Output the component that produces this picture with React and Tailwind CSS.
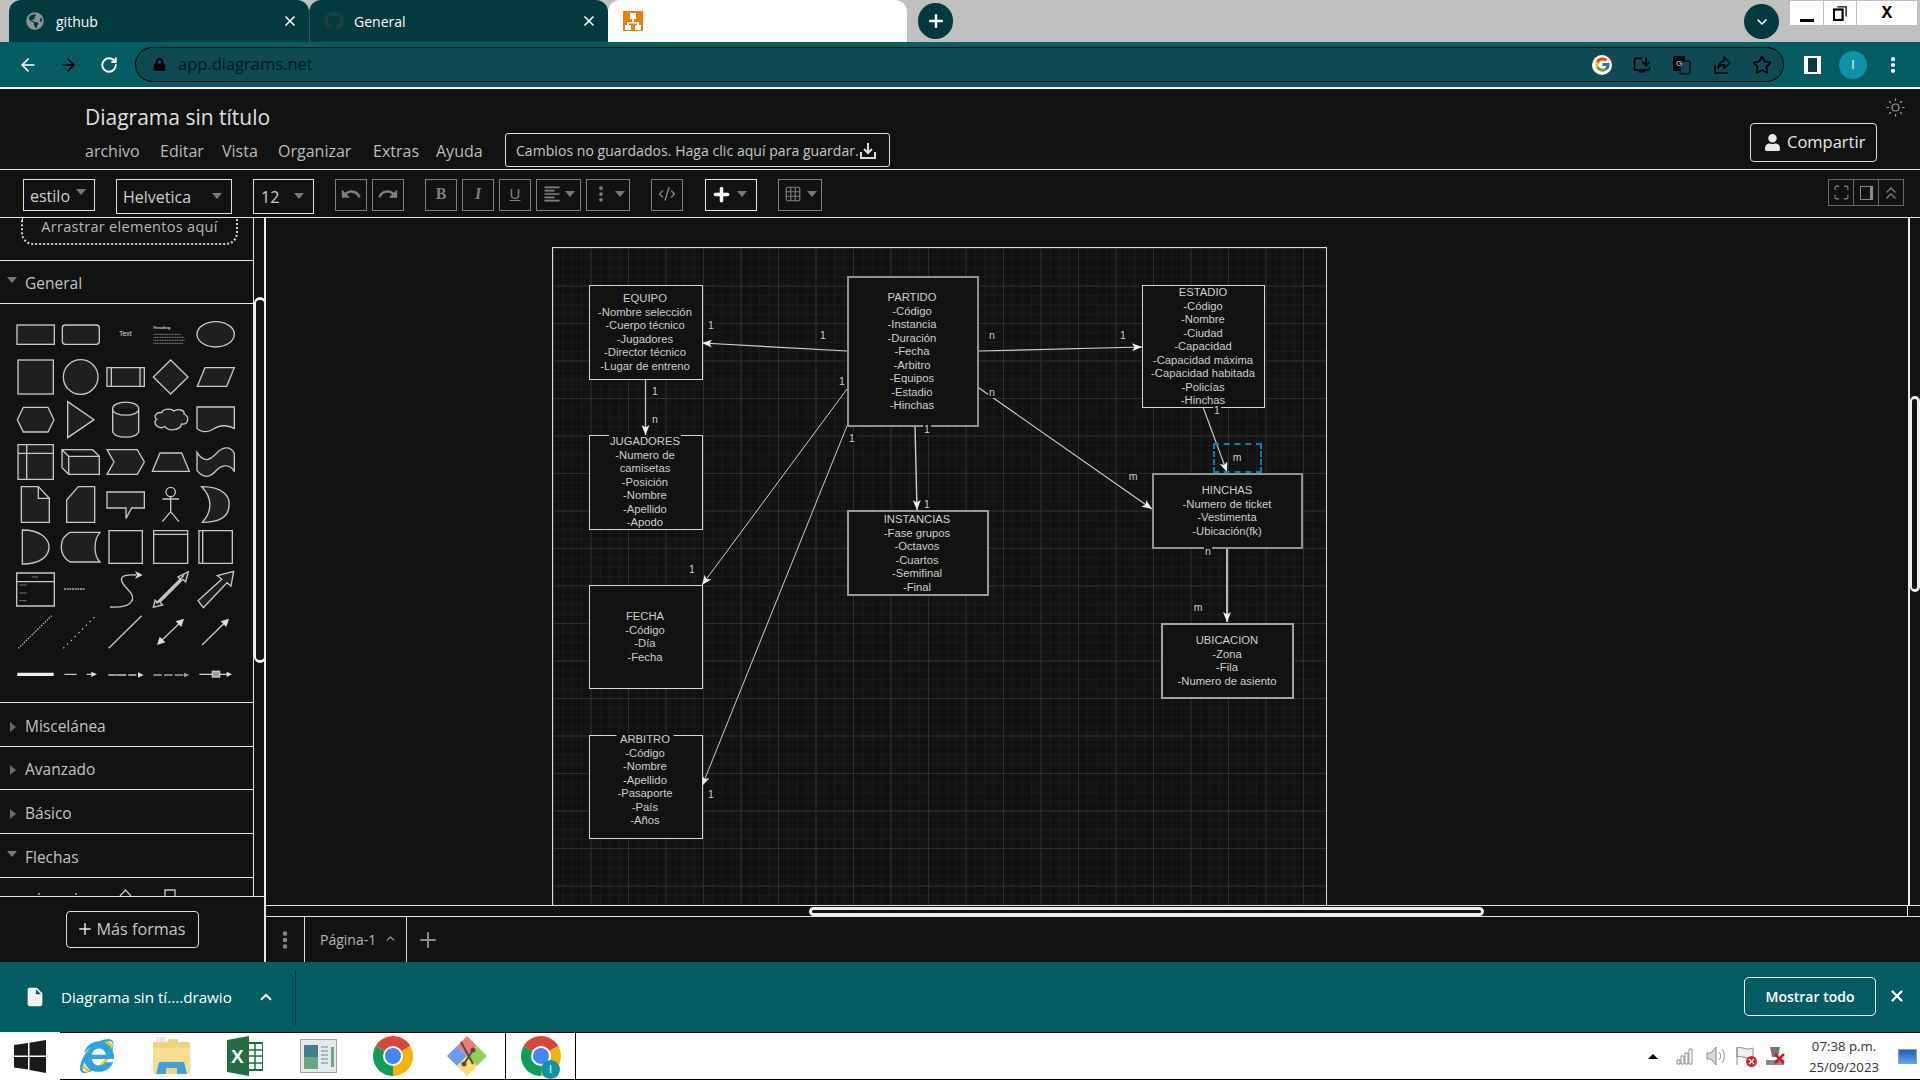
import React from 'react';
import { ArrowLeft, ArrowRight, RotateCw, Star, MoreVertical, Sun, Plus, X, ChevronUp, ChevronDown, Maximize, ChevronsUp, Grid3x3, CodeXml } from 'lucide-react';
import { FaGlobeAmericas, FaGithub, FaLock, FaUser, FaInternetExplorer } from 'react-icons/fa';
import { FcGoogle } from 'react-icons/fc';
import { MdUndo, MdRedo, MdFormatAlignLeft, MdOutlineInstallDesktop, MdInsertDriveFile } from 'react-icons/md';

const PAGE_X = 552;
const PAGE_Y = 247;

const nodes = [
  { x: 589, y: 285, r: 702, b: 379, cx: 645, top: 299, border: 'border border-[#d8d8d8]', lines: ['EQUIPO', '-Nombre selección', '-Cuerpo técnico', '-Jugadores', '-Director técnico', '-Lugar de entreno'] },
  { x: 847, y: 276, r: 978, b: 426, cx: 912, top: 298, border: 'border-2 border-[#929292]', lines: ['PARTIDO', '-Código', '-Instancia', '-Duración', '-Fecha', '-Arbitro', '-Equipos', '-Estadio', '-Hinchas'] },
  { x: 1142, y: 285, r: 1264, b: 407, cx: 1203, top: 293, border: 'border border-[#d8d8d8]', lines: ['ESTADIO', '-Código', '-Nombre', '-Ciudad', '-Capacidad', '-Capacidad máxima', '-Capacidad habitada', '-Policías', '-Hinchas'] },
  { x: 589, y: 435, r: 702, b: 529, cx: 645, top: 442, border: 'border border-[#d8d8d8]', lines: ['JUGADORES', '-Numero de', 'camisetas', '-Posición', '-Nombre', '-Apellido', '-Apodo'] },
  { x: 847, y: 510, r: 988, b: 595, cx: 917, top: 520, border: 'border-2 border-[#9a9a9a]', lines: ['INSTANCIAS', '-Fase grupos', '-Octavos', '-Cuartos', '-Semifinal', '-Final'] },
  { x: 1152, y: 473, r: 1302, b: 548, cx: 1227, top: 491, border: 'border-2 border-[#929292]', lines: ['HINCHAS', '-Numero de ticket', '-Vestimenta', '-Ubicación(fk)'] },
  { x: 1161, y: 623, r: 1293, b: 698, cx: 1227, top: 641, border: 'border-2 border-[#a2a2a2]', lines: ['UBICACION', '-Zona', '-Fila', '-Numero de asiento'] },
  { x: 589, y: 585, r: 702, b: 688, cx: 645, top: 617, border: 'border border-[#d8d8d8]', lines: ['FECHA', '-Código', '-Día', '-Fecha'] },
  { x: 589, y: 735, r: 702, b: 838, cx: 645, top: 740, border: 'border border-[#d8d8d8]', lines: ['ARBITRO', '-Código', '-Nombre', '-Apellido', '-Pasaporte', '-País', '-Años'] },
];

const edges = [
  [847, 351, 702, 343, 1.2],
  [645.5, 379, 645.5, 435, 1.2],
  [979, 351, 1142, 347, 1.2],
  [979, 388, 1152, 509, 1.1],
  [915, 426, 917, 510, 1.4],
  [847, 389, 702, 585, 1],
  [847, 426, 702, 786, 1],
  [1203, 407, 1227, 472, 1.1],
  [1227, 548, 1227, 622, 1.8],
];

const edgeLabels = [
  ['1', 711, 325], ['1', 823, 335], ['n', 992, 335], ['1', 842, 381], ['n', 992, 392],
  ['1', 852, 438], ['1', 927, 429], ['1', 927, 504], ['1', 655, 391], ['n', 655, 419],
  ['1', 692, 569], ['1', 711, 794], ['1', 1123, 335], ['1', 1217, 410], ['m', 1133, 476],
  ['n', 1208, 551], ['m', 1198, 607], ['m', 1237, 457],
];

const Caret = ({ className = '' }) => (
  <span className={`block w-0 h-0 border-x-[5px] border-x-transparent border-t-[6px] border-t-[#7a7a7a] ${className}`} />
);

const SideCaret = () => (
  <span className="block w-0 h-0 ml-[10px] mr-[10px] border-y-[5px] border-y-transparent border-l-[6px] border-l-[#6a6a6a]" />
);

const SectionRow = ({ label, open, className = '' }) => (
  <div className={`flex items-center shrink-0 pt-[4px] border-b border-[#e6e6e6] text-[15.5px] text-[#c4c4c4] ${className}`}>
    {open ? <Caret className="ml-[7px] mr-[8px] -mt-2" /> : <SideCaret />}
    <span className={open ? '' : '-ml-[1px]'}>{label}</span>
  </div>
);

const ToolBtn = ({ className = '', children }) => (
  <div className={`flex items-center justify-center h-[32px] border border-[#808080] text-[#808080] ${className}`}>
    {children}
  </div>
);

// General palette, drawn in a 3x coordinate system
const GeneralShapes = () => (
  <svg viewBox="0 282 759 1197" className="block w-[253px] h-[399px] shrink-0" fill="#1d1f21" stroke="#c8c8c8" strokeWidth="4">
    <rect x="51" y="345" width="112" height="58" />
    <rect x="187" y="345" width="111" height="58" rx="9" />
    <text x="376" y="379" fontSize="21" textAnchor="middle" fill="#d8d8d8" stroke="none" fontFamily="Liberation Sans">Text</text>
    <text x="460" y="356" fontSize="13" fontWeight="700" fill="#c8c8c8" stroke="none" fontFamily="Liberation Sans">Heading</text>
    <path d="M460 373H542M460 382H552M460 391H555M460 400H550" stroke="#b0b0b0" strokeWidth="2" strokeDasharray="4 1" fill="none" />
    <ellipse cx="647" cy="373" rx="56" ry="38" />

    <rect x="54" y="450" width="106" height="102" />
    <circle cx="242" cy="501" r="52" />
    <path d="M321 473H433V529H321ZM334 473V529M420 473V529" />
    <path d="M512 450L564 501L512 552L460 501Z" />
    <path d="M592 529L615 473H703L680 529Z" />

    <path d="M52 629L70 592H144L162 629L144 666H70Z" />
    <path d="M203 575L282 629L203 683Z" />
    <path d="M338 596C338 570 416 570 416 596V662C416 688 338 688 338 662ZM338 596C338 622 416 622 416 596" />
    <path d="M485 608C490 595 515 595 522 603C535 595 555 600 552 612C570 620 565 645 545 642C540 662 505 665 495 650C475 660 455 640 470 628C458 620 470 605 485 608Z" />
    <path d="M591 591H703V655C675 640 650 650 635 660C620 668 600 666 591 655Z" />

    <path d="M54 704H160V808H54ZM80 704V808M54 730H160" />
    <path d="M186 719H278L298 739V793H206L186 773ZM186 719L206 739H298M206 739V793" />
    <path d="M321 719H412L433 756L412 793H321L342 756Z" />
    <path d="M457 784L480 729H545L568 784Z" />
    <path d="M591 727C615 765 635 745 650 730C665 712 690 705 703 730V785C690 760 665 765 650 780C630 805 610 805 591 782Z" />

    <path d="M64 830H115L148 865V937H64ZM115 830V865H148" />
    <path d="M200 870L235 830H284V937H200Z" />
    <path d="M321 846H433V894H395L378 925V894H321Z" />
    <circle cx="512" cy="846" r="14" fill="none" />
    <path d="M512 860V905M487 867H537M487 935L512 905L537 935" fill="none" />
    <path d="M605 830C670 830 690 860 687 885C687 920 660 937 607 937C640 900 635 860 605 830Z" />

    <path d="M67 960C120 960 147 985 147 1011C147 1040 120 1062 67 1062Z" />
    <path d="M210 967H300C280 990 280 1035 300 1056H210C175 1035 175 985 210 967Z" />
    <rect x="327" y="962" width="100" height="98" fill="none" />
    <path d="M461 962H563V1060H461ZM461 973H563" fill="none" />
    <path d="M597 962H697V1060H597ZM608 962V1060" fill="none" />

    <path d="M50 1089H163V1188H50ZM50 1115H163" fill="none" />
    <path d="M58 1125H80M58 1149H80M58 1172H80M95 1101H115" stroke="#aaaaaa" strokeWidth="2" fill="none" />
    <path d="M192 1137H255" stroke="#b0b0b0" strokeWidth="5" strokeDasharray="6 2" fill="none" />
    <path d="M330 1191C400 1195 410 1165 385 1140C350 1105 360 1092 408 1095" fill="none" />
    <path d="M428 1095L405 1083L411 1095L405 1107Z" fill="#dddddd" stroke="none" />
    <path d="M460 1192L465 1170L473 1178L542 1109L534 1101L565 1085L557 1116L549 1108L480 1177L488 1185Z M468 1180L552 1096" />
    <path d="M594 1172L665 1108L652 1097L701 1084L693 1128L681 1118L610 1193Z" />

    <path d="M55 1315L155 1217" strokeDasharray="4 4" fill="none" />
    <path d="M190 1315L285 1220" strokeDasharray="4 12" fill="none" />
    <path d="M326 1315L425 1217" fill="none" />
    <path d="M476 1300L548 1231" fill="none" />
    <path d="M471 1305L496 1297L479 1280ZM552 1226L527 1234L544 1251Z" fill="#dddddd" stroke="none" />
    <path d="M606 1305L682 1231" fill="none" />
    <path d="M687 1226L662 1234L679 1251Z" fill="#dddddd" stroke="none" />

    <path d="M52 1393H161" strokeWidth="10" stroke="#eeeeee" />
    <path d="M193 1393H230M260 1393H280" fill="none" />
    <path d="M291 1393L274 1385V1401Z" fill="#dddddd" stroke="none" />
    <path d="M325 1395H420M350 1395H362" fill="none" strokeDasharray="24 6" />
    <path d="M431 1395L414 1387V1403Z" fill="#dddddd" stroke="none" />
    <path d="M460 1395H558" fill="none" strokeDasharray="26 6" stroke="#a0a0a0" />
    <path d="M568 1395L552 1388V1402Z" fill="#a0a0a0" stroke="none" />
    <path d="M598 1393H688" fill="none" />
    <path d="M696 1393L680 1385V1401Z" fill="#dddddd" stroke="none" />
    <rect x="637" y="1384" width="22" height="17" fill="#a0a0a0" stroke="#c8c8c8" />
  </svg>
);

const ChromeLogo = ({ className = '' }) => (
  <svg viewBox="0 0 40 40" className={className}>
    <path d="M20 20L2.7 10A20 20 0 0 1 37.3 10Z" fill="#db4437" />
    <path d="M20 20L37.3 10A20 20 0 0 1 20 40Z" fill="#f4b400" />
    <path d="M20 20L20 40A20 20 0 0 1 2.7 10Z" fill="#0f9d58" />
    <circle cx="20" cy="20" r="10" fill="#ffffff" />
    <circle cx="20" cy="20" r="8" fill="#4285f4" />
  </svg>
);

const TabStrip = () => (
  <div className="flex h-[42px] shrink-0 bg-[#c0c0c0] pl-[9px]">
    <div className="flex items-center w-[300px] bg-[#033a40] rounded-t-xl pl-[17px] pr-[11px] text-white text-[14px]">
      <FaGlobeAmericas className="text-[#8a9496] text-[18px]" />
      <span className="ml-[12px]">github</span>
      <X className="ml-auto" size={16} strokeWidth={2.5} />
    </div>
    <div className="flex items-center w-[299px] bg-[#033a40] rounded-t-xl border-l border-[#2a5a60] pl-[14px] pr-[11px] text-white text-[14px]">
      <FaGithub className="text-[#1c3f44] text-[20px]" />
      <span className="ml-[10px]">General</span>
      <X className="ml-auto" size={16} strokeWidth={2.5} />
    </div>
    <div className="flex items-center w-[299px] bg-white rounded-t-xl pl-[15px]">
      <svg viewBox="0 0 20 20" className="w-[20px] h-[20px]">
        <rect width="20" height="20" fill="#ef7d0d" />
        <path d="M7 2H13V8H11V11H16V14H18V19H12V14H14V12.500H6V14H8V19H2V14H4V11H9V8H7Z" fill="#ffffff" />
      </svg>
    </div>
    <div className="flex items-center justify-center w-[35px] h-[36px] mt-[3px] ml-[11px] rounded-full bg-[#033a40] text-white">
      <Plus size={20} strokeWidth={3} />
    </div>
    <div className="flex items-center justify-center w-[35px] h-[35px] mt-[4px] ml-auto rounded-full bg-[#033a40] text-white">
      <ChevronDown size={16} strokeWidth={2.5} />
    </div>
    <div className="flex h-[24px] mt-[1px] ml-[11px] mr-[3px] bg-white text-black divide-x divide-[#c0c0c0]">
      <div className="flex items-end justify-center w-[34px] pb-[3px]"><span className="block w-[14px] h-[3px] bg-black" /></div>
      <div className="flex items-center justify-center w-[33px]">
        <svg viewBox="0 0 16 18" className="w-[14px] h-[16px]" fill="none" stroke="#000000" strokeWidth="2.500"><rect x="1" y="5" width="10" height="12" /><path d="M5 2H15V13" strokeWidth="1.500" /></svg>
      </div>
      <div className="flex items-center justify-center w-[60px] text-[18px] font-bold font-['Liberation_Mono',monospace]">X</div>
    </div>
  </div>
);

const AddressBar = () => (
  <div className="flex items-center h-[47px] shrink-0 bg-[#055c63] border-b-2 border-white pl-[18px]">
    <ArrowLeft size={20} className="text-white" />
    <ArrowRight size={20} className="ml-[20px] text-black" />
    <RotateCw size={18} strokeWidth={2.5} className="ml-[22px] text-white" />
    <div className="flex items-center w-[1649px] h-[35px] ml-[17px] bg-[#0f4a52] border border-black rounded-full pl-[17px] pr-[11px]">
      <FaLock size={13} className="text-black" />
      <span className="ml-[12px] text-[16.5px] text-[#041a1e]">app.diagrams.net</span>
      <div className="flex items-center ml-auto gap-[20px] text-black">
        <span className="flex items-center justify-center w-[20px] h-[20px] rounded-full bg-white"><FcGoogle size={17} /></span>
        <MdOutlineInstallDesktop size={20} />
        <svg viewBox="0 0 20 20" className="w-[20px] h-[20px]"><rect x="1" y="1" width="12" height="15" rx="1" fill="#000000" /><rect x="8" y="6" width="10" height="13" rx="1" fill="#17434a" stroke="#000000" /><text x="4" y="11" fontSize="8" fill="#9aa" fontFamily="Liberation Sans" fontWeight="700">G</text></svg>
        <svg viewBox="0 0 20 20" className="w-[20px] h-[20px]" fill="none" stroke="#000000" strokeWidth="1.500"><path d="M3 10V18H16" /><path d="M6 14C6 9 9 6 12 6V2L18 8L12 13V9.500C9 9.500 7 11 6 14Z" /></svg>
        <Star size={20} strokeWidth={2} />
      </div>
    </div>
    <span className="block w-[17px] h-[18px] ml-[20px] bg-[#0b3a40] border-x-[4px] border-y-[2px] border-white" />
    <div className="flex items-center justify-center w-[28px] h-[28px] ml-[18px] rounded-full bg-[#0e93a8] text-white text-[12px]">I</div>
    <MoreVertical size={20} strokeWidth={3} className="ml-[16px] text-white" />
  </div>
);

const Header = () => (
  <div className="flex h-[81px] shrink-0 border-b border-[#e8e8e8]">
    <div className="flex flex-col pl-[85px]">
      <div className="h-[28px] mt-[14px] text-[21px] leading-[28px] text-[#e0e0e0] whitespace-nowrap">Diagrama sin título</div>
      <div className="flex items-center h-[34px] mt-[2px] text-[16px] text-[#bdbdbd]">
        <span className="w-[75px] pt-[2px]">archivo</span>
        <span className="w-[62px] pt-[2px]">Editar</span>
        <span className="w-[56px] pt-[2px]">Vista</span>
        <span className="w-[95px] pt-[2px]">Organizar</span>
        <span className="w-[63px] pt-[2px]">Extras</span>
        <span className="w-[69px] pt-[2px]">Ayuda</span>
        <div className="flex items-center w-[385px] h-[34px] border border-[#e0e0e0] rounded-[3px] pl-[10px] pt-[1px] text-[14px] tracking-[0.05px] text-[#c8c8c8] whitespace-nowrap">
          Cambios no guardados. Haga clic aquí para guardar.
          <svg viewBox="0 0 18 18" className="w-[18px] h-[18px]" fill="none" stroke="#dddddd" strokeWidth="2">
            <path d="M9 1V10M5 7L9 11L13 7" />
            <path d="M2 10V16H16V10" />
          </svg>
        </div>
      </div>
    </div>
    <div className="flex flex-col items-end ml-auto">
      <Sun size={21} strokeWidth={1.4} className="mt-[8px] mr-[14px] text-[#999999]" />
      <div className="flex items-center w-[127px] h-[39px] mt-[5px] mr-[43px] border border-[#e0e0e0] rounded-[4px] pl-[13px] text-[16.5px] text-[#e8e8e8]">
        <FaUser size={17} />
        <span className="ml-[6px]">Compartir</span>
      </div>
    </div>
  </div>
);

const Toolbar = () => (
  <div className="flex items-start h-[48px] shrink-0 pt-[9px] border-b border-[#e8e8e8] text-[#d0d0d0]">
    <div className="flex items-center w-[72px] h-[32px] ml-[23px] border border-[#e0e0e0] pl-[6px] pt-[1px] text-[16px]">
      estilo<Caret className="ml-[6px] -mt-[8px]" />
    </div>
    <div className="flex items-center w-[116px] h-[35px] ml-[21px] border border-[#e0e0e0] pl-[6px] text-[16px]">
      Helvetica<Caret className="ml-auto mr-[9px] -mt-[2px]" />
    </div>
    <div className="flex items-center w-[61px] h-[35px] ml-[21px] border border-[#e0e0e0] pl-[7px] text-[16px]">
      12<Caret className="ml-auto mr-[9px] -mt-[2px]" />
    </div>
    <ToolBtn className="w-[32px] ml-[21px]"><MdUndo size={22} className="-mt-[2px]" /></ToolBtn>
    <ToolBtn className="w-[32px] ml-[5px]"><MdRedo size={22} className="-mt-[2px]" /></ToolBtn>
    <ToolBtn className="w-[32px] ml-[21px] pb-[2px] text-[16px] font-bold font-['Liberation_Serif',serif]">B</ToolBtn>
    <ToolBtn className="w-[32px] ml-[5px] pb-[2px] text-[16px] italic font-bold font-['Liberation_Serif',serif]">I</ToolBtn>
    <ToolBtn className="w-[32px] ml-[5px] pb-[2px] text-[15px] underline font-['Liberation_Sans',sans-serif]">U</ToolBtn>
    <ToolBtn className="w-[45px] ml-[5px] gap-[3px] pb-[2px]"><MdFormatAlignLeft size={20} /><Caret /></ToolBtn>
    <ToolBtn className="w-[44px] ml-[5px] gap-[4px] pb-[2px]"><MoreVertical size={20} strokeWidth={2.5} /><Caret /></ToolBtn>
    <ToolBtn className="w-[32px] ml-[21px] pb-[2px]"><CodeXml size={18} /></ToolBtn>
    <div className="flex items-center justify-center w-[52px] h-[32px] ml-[22px] gap-[5px] pb-[2px] border border-[#e8e8e8] text-white">
      <Plus size={21} strokeWidth={4} className="-ml-[4px]" /><Caret />
    </div>
    <ToolBtn className="w-[44px] ml-[21px] gap-[5px] pb-[2px]"><Grid3x3 size={18} strokeWidth={1.5} /><Caret /></ToolBtn>
    <div className="flex ml-auto mr-[16px] text-[#8a8a8a]">
      <div className="flex items-center justify-center w-[26px] h-[27px] border border-[#6a6a6a]"><Maximize size={17} strokeWidth={1.5} /></div>
      <div className="flex items-center justify-center w-[25px] h-[27px] border-y border-r border-[#6a6a6a]"><span className="block w-[13px] h-[14px] border border-[#8a8a8a] border-r-[3px]" /></div>
      <div className="flex items-center justify-center w-[25px] h-[27px] border-y border-r border-[#6a6a6a]"><ChevronsUp size={20} strokeWidth={1.5} /></div>
    </div>
  </div>
);

const Sidebar = () => (
  <div className="flex flex-col w-[266px] shrink-0">
    <div className="flex h-[678px] shrink-0">
      <div className="flex flex-col w-[254px] border-r border-[#e6e6e6] overflow-hidden">
        <div className="h-[43px] shrink-0 border-b border-[#e6e6e6]">
          <div className="flex items-start justify-center w-[217px] h-[27px] ml-[21px] border-x-2 border-b-2 border-dotted border-[#d0d0d0] rounded-b-xl text-[14.5px] leading-[18px] tracking-[0.3px] text-[#b8b8b8] whitespace-nowrap">
            Arrastrar elementos aquí
          </div>
        </div>
        <SectionRow label="General" open className="h-[43px]" />
        <GeneralShapes />
        <div className="h-[1px] shrink-0 -mt-[1px] bg-[#e6e6e6]" />
        <SectionRow label="Miscelánea" className="h-[44px]" />
        <SectionRow label="Avanzado" className="h-[43px]" />
        <SectionRow label="Básico" className="h-[44px]" />
        <SectionRow label="Flechas" open className="h-[44px]" />
        <svg viewBox="0 0 253 18" className="block w-[253px] h-[18px] shrink-0" fill="none" stroke="#c8c8c8" strokeWidth="1.300">
          <path d="M120 18L125.500 12L131 18" />
          <path d="M165 18V12H175V18" />
          <path d="M39 17V15M76 17V15" />
        </svg>
      </div>
      <div className="w-[12px] border-r-2 border-[#eeeeee]">
        <div className="w-[12px] h-[366px] mt-[79px] border-x-2 border-t-[3px] border-b-[3px] border-[#eeeeee] rounded-[6px]" />
      </div>
    </div>
    <div className="flex items-center flex-1 border-t border-r-2 border-[#e6e6e6] pl-[66px]">
      <div className="flex items-center justify-center w-[133px] h-[37px] pb-[1px] border border-[#e0e0e0] rounded-[4px] text-[16.2px] text-[#c8c8c8]">
        <Plus size={18} strokeWidth={2} className="mr-[3px] -ml-[4px] text-[#e8e8e8]" />Más formas
      </div>
    </div>
  </div>
);

const DiagramPage = () => (
  <div className="relative w-[775px] h-[700px] shrink-0 ml-[286px] mt-[29px] border-x border-t border-[#dddddd] font-['Liberation_Sans',sans-serif] text-[11.25px] leading-[13.5px] text-[#cfcfcf] bg-[#121212] bg-[linear-gradient(#2e2e2e_1px,transparent_1px),linear-gradient(90deg,#2e2e2e_1px,transparent_1px),linear-gradient(#1c1c1c_1px,transparent_1px),linear-gradient(90deg,#1c1c1c_1px,transparent_1px)] bg-[size:37.5px_37.5px,37.5px_37.5px,9.375px_9.375px,9.375px_9.375px]">
    <svg viewBox={`${PAGE_X} ${PAGE_Y} 775 700`} className="absolute -left-[1px] -top-[1px] w-[775px] h-[700px]" fill="none" stroke="#d0d0d0">
      <defs>
        <marker id="arrow" viewBox="0 0 10 8" refX="10" refY="4" markerWidth="10" markerHeight="8" markerUnits="userSpaceOnUse" orient="auto">
          <path d="M0 0L10 4L0 8L2.500 4Z" fill="#eeeeee" stroke="none" />
        </marker>
      </defs>
      {edges.map(([x1, y1, x2, y2, width], i) => (
        <line key={i} x1={x1} y1={y1} x2={x2} y2={y2} strokeWidth={width} markerEnd="url(#arrow)" />
      ))}
    </svg>
    {nodes.map((node) => (
      <div
        key={node.lines[0]}
        className={`absolute bg-[#121212] ${node.border}`}
        style={{ left: node.x - PAGE_X - 1, top: node.y - PAGE_Y - 1, width: node.r - node.x + 1, height: node.b - node.y + 1 }}
      />
    ))}
    {nodes.map((node) => (
      <div
        key={node.lines[0]}
        className="absolute -translate-x-1/2 bg-[#121212] text-center whitespace-nowrap px-[1px]"
        style={{ left: node.cx - PAGE_X - 1, top: node.top - 7 - PAGE_Y - 1, height: node.lines.length * 13.5 - 2 }}
      >
        {node.lines.map((line) => (
          <div key={line}>{line}</div>
        ))}
      </div>
    ))}
    <div className="absolute left-[660px] top-[195px] w-[49px] h-[30px] border-2 border-dashed border-[#0a7fb5]" />
    {edgeLabels.map(([text, x, y], i) => (
      <span
        key={i}
        className="absolute -translate-x-1/2 -translate-y-1/2 bg-[#121212] px-[1px] text-[10.5px] leading-[12px] text-[#d0d0d0]"
        style={{ left: x - PAGE_X - 1, top: y - PAGE_Y - 1 }}
      >
        {text}
      </span>
    ))}
  </div>
);

const Workspace = () => (
  <div className="flex flex-col flex-1 min-w-0">
    <div className="flex h-[687px] shrink-0">
      <div className="flex-1 min-w-0 overflow-hidden">
        <DiagramPage />
      </div>
      <div className="w-[12px] shrink-0 border-l-2 border-[#eeeeee]">
        <div className="w-[10px] h-[196px] mt-[178px] border-r-[3px] border-t-[3px] border-l-[2px] border-b-[3px] border-[#eeeeee] rounded-t-[6px] rounded-b-[6px]" />
      </div>
    </div>
    <div className="flex items-center h-[12px] shrink-0 border-y border-[#e6e6e6]">
      <div className="w-[675px] h-[9px] ml-[543px] border-[3px] border-[#eeeeee] rounded-full" />
      <span className="block w-[1px] h-full ml-auto mr-[12px] bg-[#e6e6e6]" />
    </div>
    <div className="flex items-stretch flex-1 text-[14px] text-[#b8b8b8]">
      <div className="flex items-center justify-center w-[38px] text-[#8a8a8a]">
        <MoreVertical size={22} strokeWidth={3} />
      </div>
      <div className="flex items-center w-[103px] pl-[15px] border-x border-[#dddddd]">
        Página-1
        <ChevronUp size={13} strokeWidth={2.5} className="ml-[8px] -mt-[2px] text-[#9a9a9a]" />
      </div>
      <div className="flex items-center ml-[9px] text-[#8a8a8a]">
        <Plus size={24} strokeWidth={2} />
      </div>
    </div>
  </div>
);

const DownloadBar = () => (
  <div className="flex items-center h-[70px] shrink-0 bg-[#055c63] text-white">
    <MdInsertDriveFile size={22} className="ml-[24px] text-[#f2f2f2]" />
    <span className="ml-[15px] text-[15.2px] whitespace-nowrap">Diagrama sin tí....drawio</span>
    <ChevronUp size={18} strokeWidth={2.5} className="ml-[25px]" />
    <span className="block w-[1px] h-[55px] ml-[20px] bg-[#032c30]" />
    <div className="flex items-center justify-center w-[132px] h-[39px] -mt-[2px] ml-auto border border-white rounded-[5px] text-[14px] font-semibold">
      Mostrar todo
    </div>
    <X size={18} strokeWidth={3} className="ml-[12px] mr-[14px] -mt-[2px]" />
  </div>
);

const Taskbar = () => (
  <div className="flex h-[48px] shrink-0 bg-white">
    <div className="flex items-center justify-center w-[60px]">
      <svg viewBox="0 0 32 33" className="w-[32px] h-[33px]" fill="#1a1a1a">
        <path d="M0 5L14 3V15.500H0ZM15.500 2.800L32 0V15.500H15.500ZM0 17H14V29.500L0 27.500ZM15.500 17H32V33L15.500 30Z" />
      </svg>
    </div>
    <div className="flex items-center flex-1 border-y border-black">
      <div className="relative flex items-center justify-center w-[38px] h-[40px] ml-[18px]">
        <span className="absolute w-[38px] h-[22px] rounded-[50%] border-[3px] border-[#f5c518] -rotate-45" />
        <FaInternetExplorer size={34} className="relative text-[#2aa3e8]" />
      </div>
      <svg viewBox="0 0 39 40" className="w-[39px] h-[40px] ml-[36px]">
        <path d="M1 6H15L17 3H26V6H38V38H1Z" fill="#f2d27a" />
        <rect x="4" y="1" width="10" height="5" fill="#e8e8e8" />
        <path d="M1 12H38V38H1Z" fill="#f7dd90" />
        <path d="M7 26H32L35 38H4Z" fill="#3f9fd8" />
        <rect x="14" y="32" width="11" height="6" fill="#f2d27a" />
      </svg>
      <svg viewBox="0 0 36 40" className="w-[36px] h-[40px] ml-[36px]">
        <rect x="20" y="7" width="16" height="27" fill="#ffffff" stroke="#1d6f42" strokeWidth="2" />
        <path d="M21 14H35M21 20H35M21 27H35M28 7V34" stroke="#1d6f42" strokeWidth="1.500" />
        <path d="M0 4L22 0V40L0 36Z" fill="#1d6f42" />
        <text x="4" y="27" fontSize="19" fontWeight="700" fill="#ffffff" fontFamily="Liberation Sans">X</text>
      </svg>
      <svg viewBox="0 0 37 34" className="w-[37px] h-[34px] ml-[37px]">
        <rect x="0.500" y="0.500" width="36" height="33" fill="#e4e9ee" stroke="#9aa5ad" />
        <rect x="4" y="6" width="14" height="24" fill="#3f7f8f" />
        <rect x="4" y="18" width="14" height="12" fill="#6aa77a" />
        <path d="M21 8H28M21 12H28M21 16H28M21 20H28M21 24H28" stroke="#9aa5ad" strokeWidth="1.500" />
        <rect x="31" y="8" width="3" height="20" fill="#6aa77a" />
      </svg>
      <ChromeLogo className="w-[40px] h-[40px] ml-[36px]" />
      <svg viewBox="0 0 40 40" className="w-[40px] h-[40px] ml-[34px]">
        <path d="M20 0L30 10L20 20L10 10Z" fill="#f07a7a" />
        <path d="M10 10L20 20L10 30L0 20Z" fill="#6a9cf0" />
        <path d="M30 10L40 20L30 30L20 20Z" fill="#8fcf5f" />
        <path d="M20 20L30 30L20 40L10 30Z" fill="#f7dc6f" />
        <path d="M14 6L26 28M26 14L17 28" stroke="#5a4a3a" strokeWidth="2" fill="none" />
        <circle cx="17" cy="28" r="2.500" fill="#5a4a3a" />
        <circle cx="26" cy="14" r="2.500" fill="#5a4a3a" />
      </svg>
      <div className="relative flex items-center justify-center w-[71px] h-full ml-[18px] border-x border-black">
        <ChromeLogo className="w-[40px] h-[40px]" />
        <span className="absolute left-[35px] top-[27px] flex items-center justify-center w-[19px] h-[19px] rounded-full bg-[#0e93a8] text-white text-[11px]">I</span>
      </div>
      <div className="flex items-center ml-auto">
        <span className="block w-0 h-0 border-x-[5px] border-x-transparent border-b-[5px] border-b-black" />
        <svg viewBox="0 0 18 18" className="w-[18px] h-[18px] ml-[18px]" fill="none" stroke="#8a8a8a"><path d="M1 13H4V17H1ZM5 9H8V17H5ZM9 6H12V17H9ZM13 2H16V17H13Z" /></svg>
        <svg viewBox="0 0 22 20" className="w-[22px] h-[20px] ml-[12px]" fill="#d8d8d8" stroke="#8a8a8a"><path d="M1 7H5L10 1V19L5 13H1Z" /><path d="M13 6C15 8 15 12 13 14M16 3C19 7 19 13 16 17" fill="none" /></svg>
        <div className="relative w-[20px] h-[20px] ml-[7px]">
          <svg viewBox="0 0 20 20" className="w-[20px] h-[20px]" fill="#f0f0f0" stroke="#8a8a8a"><path d="M2 1V19M2 2C7 0 11 5 18 2V11C11 14 7 9 2 11Z" /></svg>
          <span className="absolute right-[-2px] bottom-[-1px] flex items-center justify-center w-[11px] h-[11px] rounded-full bg-[#d9262c] text-white"><X size={9} strokeWidth={3} /></span>
        </div>
        <div className="relative w-[20px] h-[20px] ml-[10px]">
          <svg viewBox="0 0 20 20" className="w-[20px] h-[20px]"><path d="M5 1H15L13 11H7Z" fill="#777777" /><path d="M1 14H19V19H1Z" fill="#8a8a8a" /></svg>
          <X size={15} strokeWidth={4} className="absolute right-[-2px] bottom-0 text-[#e0101a]" />
        </div>
        <div className="flex flex-col items-center w-[80px] ml-[19px] pt-[2px] text-[13.2px] leading-[21px] text-[#333333]">
          <span>07:38 p.m.</span>
          <span>25/09/2023</span>
        </div>
        <span className="block w-[19px] h-[15px] ml-[14px] mr-[3px] bg-[linear-gradient(#1c5fc0,#5fa0e8)] border border-[#8aa0b8]" />
      </div>
    </div>
  </div>
);

const App = () => (
  <div className="flex flex-col w-[1920px] h-[1080px] overflow-hidden bg-[#121212] font-['Open_Sans',sans-serif]">
    <TabStrip />
    <AddressBar />
    <div className="flex flex-col flex-1 min-h-0">
      <Header />
      <Toolbar />
      <div className="flex flex-1 min-h-0">
        <Sidebar />
        <Workspace />
      </div>
    </div>
    <DownloadBar />
    <Taskbar />
  </div>
);

export default App;
